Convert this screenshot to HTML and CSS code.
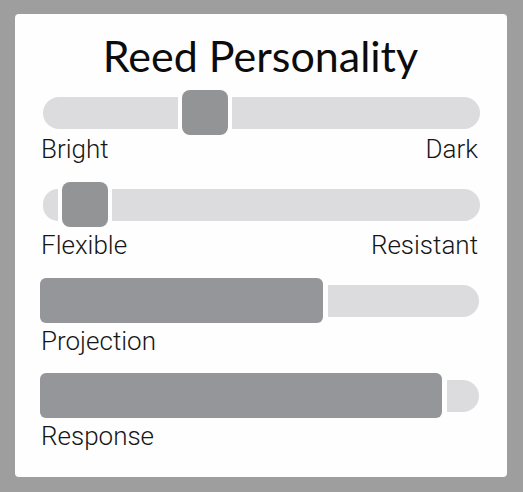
FILE: index.html
```html
<!DOCTYPE html>
<html lang="en">
<head>
    <meta charset="UTF-8">
    <meta name="viewport" content="width=device-width, initial-scale=1.0">
    <title>Reed Personality</title>
    <link rel="stylesheet" href="styles.css">
</head>
<body>
    <div class="card">
        <h1>Reed Personality</h1>

        <div class="group">
            <div class="slider">
                <div class="track track-left" style="width: 135px"></div>
                <div class="thumb"></div>
                <div class="track track-right"></div>
            </div>
            <div class="labels">
                <span>Bright</span>
                <span>Dark</span>
            </div>
        </div>

        <div class="group">
            <div class="slider">
                <div class="track track-left" style="width: 15px"></div>
                <div class="thumb"></div>
                <div class="track track-right"></div>
            </div>
            <div class="labels labels-low">
                <span>Flexible</span>
                <span>Resistant</span>
            </div>
        </div>

        <div class="group">
            <div class="bar">
                <div class="fill" style="width: 283px"></div>
                <div class="rest"></div>
            </div>
            <div class="labels labels-low">
                <span>Projection</span>
            </div>
        </div>

        <div class="group">
            <div class="bar">
                <div class="fill" style="width: 402px"></div>
                <div class="rest"></div>
            </div>
            <div class="labels labels-low">
                <span>Response</span>
            </div>
        </div>
    </div>
</body>
</html>
```

FILE: styles.css
```css
* {
    margin: 0;
    padding: 0;
    box-sizing: border-box;
}

body {
    background-color: #9d9e9d;
    padding: 14px 16px 15px 15px;
    font-family: Roboto, "Liberation Sans", sans-serif;
}

.card {
    background-color: #fefefe;
    border-radius: 4px;
    padding: 17px 26px 26px 25px;
    height: 463px;
}

h1 {
    font-family: Lato, "Open Sans", sans-serif;
    font-weight: 400;
    font-size: 43px;
    line-height: 50px;
    text-align: center;
    color: #0c0c0c;
    margin-bottom: 9px;
}

.group {
    margin-bottom: 18px;
}

.group:nth-of-type(-n+2) {
    margin-bottom: 19px;
}

.slider {
    display: flex;
    align-items: center;
    gap: 4px;
    height: 45px;
    padding: 0 1px 0 3px;
}

.track {
    height: 32px;
    background-color: #dcdcde;
}

.track-left {
    border-radius: 16px 0 0 16px;
}

.track-right {
    flex: 1;
    border-radius: 0 16px 16px 0;
}

.thumb {
    width: 46px;
    height: 45px;
    border-radius: 8px;
    background-color: #939496;
}

.bar {
    display: flex;
    align-items: center;
    gap: 5px;
    height: 45px;
    padding-right: 2px;
}

.fill {
    height: 45px;
    border-radius: 6px;
    background-color: #95969a;
}

.rest {
    flex: 1;
    height: 32px;
    border-radius: 0 16px 16px 0;
    background-color: #dcdcde;
}

.labels {
    display: flex;
    justify-content: space-between;
    padding: 0 3px 0 1px;
    font-size: 26px;
    font-weight: 300;
    line-height: 28px;
    color: #161616;
}

.labels-low {
    margin-top: 4px;
}
```
